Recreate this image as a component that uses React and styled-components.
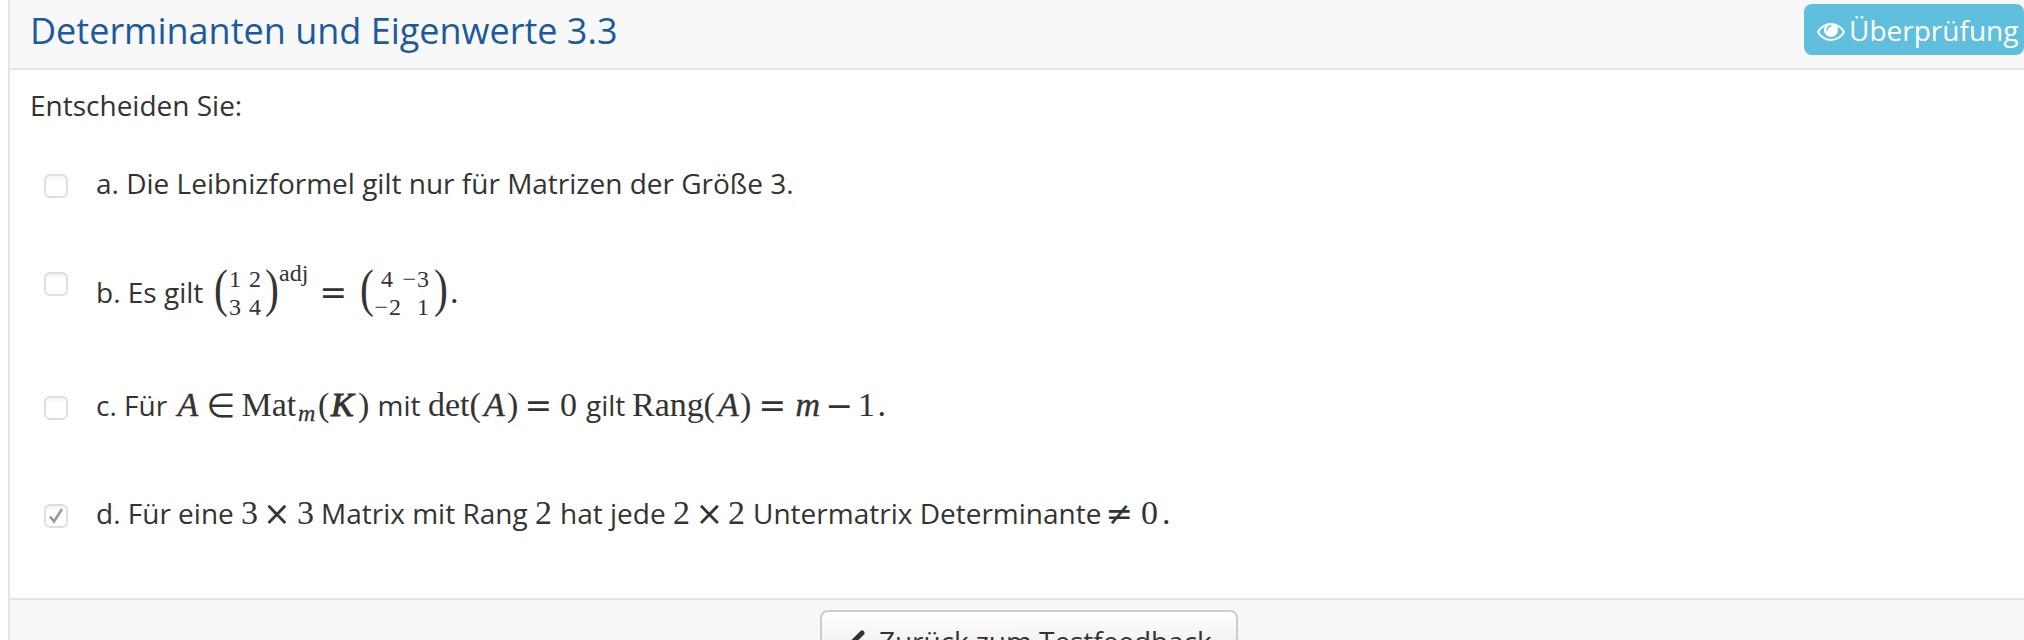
import React from "react";
import styled, { createGlobalStyle } from "styled-components";

const Global = createGlobalStyle`
  * { box-sizing: border-box; }
  html, body { margin: 0; height: 640px; overflow: hidden; background: #fff; }
`;

const Page = styled.div`
  width: 2024px;
  height: 640px;
  overflow: hidden;
  padding-left: 8px;
  font-family: "Open Sans", sans-serif;
  font-size: 28px;
  line-height: 40px;
  color: #333;
`;

const Panel = styled.section`
  height: 640px;
  border-left: 2px solid #e5e5e5;
  display: flex;
  flex-direction: column;
`;

const Header = styled.header`
  height: 70px;
  flex: none;
  display: flex;
  justify-content: space-between;
  align-items: flex-start;
  overflow: hidden;
  padding-left: 20px;
  background: #f8f8f8;
  border-bottom: 2px solid #e5e5e5;
`;

const Title = styled.h1`
  margin: 6px 0 0;
  font-size: 36px;
  font-weight: 400;
  line-height: 50px;
  color: #1b5a9c;
  white-space: nowrap;
`;

const ReviewButton = styled.button`
  display: flex;
  gap: 4px;
  width: 220px;
  height: 51px;
  margin-top: 4px;
  padding: 7px 0 0 13px;
  border: 0;
  border-radius: 8px;
  background: #5fbfdc;
  color: #fff;
  font: 28px/38px "Open Sans", sans-serif;
  white-space: nowrap;
  svg { flex: none; margin-top: 6px; }
`;

const Body = styled.main`
  height: 528px;
  flex: none;
  padding: 15px 0 0 20px;
`;

const Prompt = styled.p`
  margin: 0;
  height: 89px;
`;

const Option = styled.label`
  display: flex;
  align-items: flex-start;
  height: ${(p) => p.$height}px;
  padding-left: 14px;
`;

const Box = styled.span`
  flex: none;
  display: grid;
  place-items: center;
  width: 24px;
  height: 24px;
  margin-right: 28px;
  border: 2px solid #dedede;
  border-radius: 6px;
  background: linear-gradient(#f4f4f4, #fff 5px);
`;

const Line = styled.span`
  display: flex;
  align-items: baseline;
  margin-top: ${(p) => p.$top || 0}px;
  height: 40px;
  white-space: pre;
`;

const Run = styled.span`
  flex: none;
  width: ${(p) => (p.$w ? p.$w + "px" : "auto")};
`;

const Maths = styled(Run)`
  font-family: "Liberation Serif", serif;
  font-size: ${(p) => p.$size || 34}px;
  line-height: 1;
`;

const Variable = styled(Maths)`
  font-style: italic;
  -webkit-text-stroke: ${(p) => (p.$bold ? 1 : 0.4)}px #333;
`;

const Operator = styled(Run)`
  font-family: "DejaVu Sans", sans-serif;
  font-size: 33px;
  line-height: 1;
  position: relative;
  top: 1px;
`;

const Sub = styled(Maths)`
  font-style: italic;
  -webkit-text-stroke: 0.3px #333;
  position: relative;
  top: 5px;
`;

const Sup = styled(Maths)`
  position: relative;
  top: -22px;
`;

const Paren = styled(Maths)`
  font-size: 52px;
  position: relative;
  top: 3px;
  span {
    display: inline-block;
    transform: scaleX(0.8);
    transform-origin: left;
  }
`;

const Matrix = styled.span`
  flex: none;
  display: grid;
  grid-template-columns: ${(p) => p.$cols};
  grid-template-rows: 28px 28px;
  width: ${(p) => p.$w}px;
  position: relative;
  top: -16px;
  font: 24px/28px "Liberation Serif", serif;
`;

const Entry = styled.span`
  text-align: ${(p) => (p.$center ? "center" : "right")};
`;

const Minus = styled.span`
  letter-spacing: 1px;
`;

const Footer = styled.footer`
  flex: 1;
  display: flex;
  justify-content: flex-start;
  padding: 10px 0 0 810px;
  background: #f7f7f7;
  border-top: 2px solid #e5e5e5;
  overflow: hidden;
`;

const BackButton = styled.button`
  flex: none;
  display: flex;
  width: 418px;
  height: 64px;
  padding: 9px 0 0 24px;
  border: 2px solid #ccc;
  border-radius: 8px;
  background: linear-gradient(#fff, #e6e6e6);
  color: #333;
  font: 28px/40px "Open Sans", sans-serif;
  letter-spacing: -0.06px;
  text-shadow: 0 2px 2px rgba(255, 255, 255, 0.75);
  white-space: nowrap;
  svg { flex: none; margin: 8px 9px 0 0; }
`;

const Eye = () => (
  <svg width="28" height="28" viewBox="0 0 1792 1792" fill="currentColor">
    <path d="M1664 960q-152-236-381-353 61 104 61 225 0 185-131.5 316.5t-316.5 131.5-316.5-131.5-131.5-316.5q0-121 61-225-229 117-381 353 133 205 333.5 326.5t434.5 121.5 434.5-121.5 333.5-326.5zm-720-384q0-20-14-34t-34-14q-125 0-214.5 89.5t-89.5 214.5q0 20 14 34t34 14 34-14 14-34q0-86 61-147t147-61q20 0 34-14t14-34zm848 384q0 34-20 69-140 230-376.5 368.5t-499.5 138.5-499.5-139-376.5-368q-20-35-20-69t20-69q140-229 376.5-368t499.5-139 499.5 139 376.5 368q20 35 20 69z" />
  </svg>
);

const Tick = () => (
  <svg width="14" height="16" viewBox="0 0 14 16" fill="none" stroke="#999" strokeWidth="2.6">
    <path d="M1 8.5 L5 13.5 L13 1" />
  </svg>
);

const Chevron = () => (
  <svg width="24" height="28" viewBox="0 0 24 28" fill="none" stroke="#333" strokeWidth="5" strokeLinecap="round">
    <path d="M16 4 L6 14 L16 24" />
  </svg>
);

export default function App() {
  return (
    <Page>
      <Global />
      <Panel>
        <Header>
          <Title>Determinanten und Eigenwerte 3.3</Title>
          <ReviewButton><Eye />Überprüfung</ReviewButton>
        </Header>
        <Body>
          <Prompt>Entscheiden Sie:</Prompt>
          <Option $height={98}>
            <Box />
            <Line $top={-11}>a. Die Leibnizformel gilt nur für Matrizen der Größe 3.</Line>
          </Option>
          <Option $height={124}>
            <Box />
            <Line $top={-12}>
              <Run $w={118}>b. Es gilt</Run>
              <Paren $w={15}><span>(</span></Paren>
              <Matrix $w={36} $cols="12px 20px">
                <Entry>1</Entry><Entry>2</Entry><Entry>3</Entry><Entry>4</Entry>
              </Matrix>
              <Paren $w={14}><span>)</span></Paren>
              <Sup $w={40.5} $size={24}>adj</Sup>
              <Operator $w={40.5}>=</Operator>
              <Paren $w={13}><span>(</span></Paren>
              <Matrix $w={61} $cols="28px 28px">
                <Entry $center>4</Entry>
                <Entry><Minus>−</Minus>3</Entry>
                <Entry><Minus>−</Minus>2</Entry>
                <Entry>1</Entry>
              </Matrix>
              <Paren $w={16}><span>)</span></Paren>
              <Maths>.</Maths>
            </Line>
          </Option>
          <Option $height={108}>
            <Box />
            <Line $top={-11}>
              <Run $w={81.5}>c. Für</Run>
              <Variable $w={29}>A</Variable>
              <Operator $w={35}>∈</Operator>
              <Maths $w={56.5}>Mat</Maths>
              <Sub $w={20} $size={24}>m</Sub>
              <Maths $w={13}>(</Maths>
              <Variable $w={27} $bold>K</Variable>
              <Maths $w={19.5}>)</Maths>
              <Run $w={50.5}>mit</Run>
              <Maths $w={41.5}>det</Maths>
              <Maths $w={14.5}>(</Maths>
              <Variable $w={23}>A</Variable>
              <Maths $w={17.5}>)</Maths>
              <Operator $w={35.5}>=</Operator>
              <Maths $w={26}>0</Maths>
              <Run $w={46}>gilt</Run>
              <Maths $w={71.5}>Rang</Maths>
              <Maths $w={14.5}>(</Maths>
              <Variable $w={22}>A</Variable>
              <Maths $w={18.5}>)</Maths>
              <Operator $w={37}>=</Operator>
              <Variable $w={30}>m</Variable>
              <Operator $w={32.5}>−</Operator>
              <Maths $w={19.5}>1</Maths>
              <Maths>.</Maths>
            </Line>
          </Option>
          <Option $height={60}>
            <Box><Tick /></Box>
            <Line $top={-11}>
              <Run $w={145}>d. Für eine</Run>
              <Maths $w={22}>3</Maths>
              <Operator $w={34}>×</Operator>
              <Maths $w={24}>3</Maths>
              <Run $w={214}>Matrix mit Rang</Run>
              <Maths $w={25}>2</Maths>
              <Run $w={113}>hat jede</Run>
              <Maths $w={22.5}>2</Maths>
              <Operator $w={32.5}>×</Operator>
              <Maths $w={25}>2</Maths>
              <Run $w={352.5}>Untermatrix Determinante</Run>
              <Operator $w={35.5}>≠</Operator>
              <Maths $w={21}>0</Maths>
              <Maths>.</Maths>
            </Line>
          </Option>
        </Body>
        <Footer>
          <BackButton><Chevron />Zurück zum Testfeedback</BackButton>
        </Footer>
      </Panel>
    </Page>
  );
}
